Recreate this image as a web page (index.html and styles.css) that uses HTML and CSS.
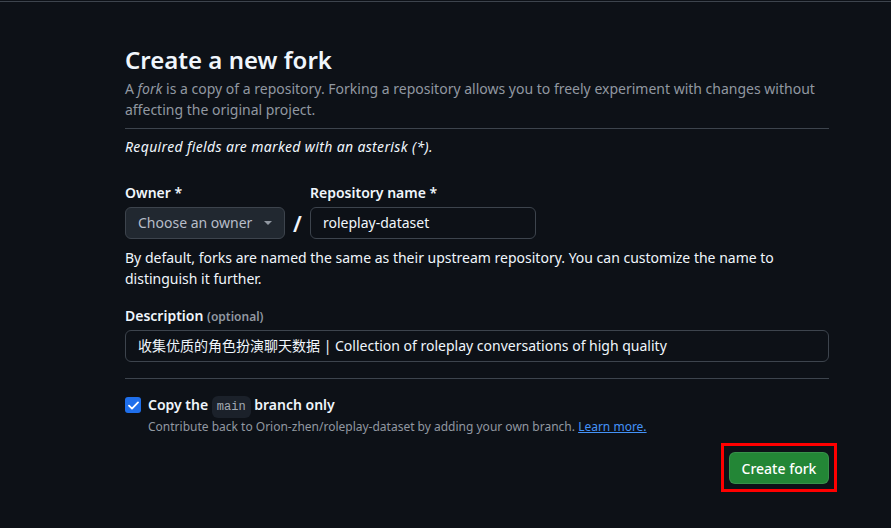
FILE: index.html
```html
<!DOCTYPE html>
<html lang="en">
<head>
<meta charset="utf-8">
<title>Create a new fork</title>
<link rel="stylesheet" href="styles.css">
</head>
<body>
<div class="topline"></div>
<main class="page">
  <div class="subhead">
    <h1 class="title">Create a new fork</h1>
    <p class="lead">A <em>fork</em> is a copy of a repository. Forking a repository allows you to freely experiment with changes without affecting the original project.</p>
  </div>
  <p class="required">Required fields are marked with an asterisk (*).</p>

  <div class="name-row">
    <div class="field owner">
      <label class="label">Owner *</label>
      <div class="select">
        <span>Choose an owner</span>
        <svg class="caret" width="8" height="4" viewBox="0 0 8 4"><path d="M0 0h8L4 4z" fill="#9198a1"/></svg>
      </div>
    </div>
    <span class="slash">/</span>
    <div class="field repo">
      <label class="label">Repository name *</label>
      <div class="input repo-input">roleplay-dataset</div>
    </div>
  </div>
  <p class="note">By default, forks are named the same as their upstream repository. You can customize the name to distinguish it further.</p>

  <div class="field desc">
    <label class="label desc-label">Description <span class="optional">(optional)</span></label>
    <div class="input desc-input">收集优质的角色扮演聊天数据 | Collection of roleplay conversations of high quality</div>
  </div>

  <div class="check-row">
    <span class="checkbox">
      <svg width="11" height="9" viewBox="0 0 11 9"><path d="M1 4.6l3 3L10 1.4" fill="none" stroke="#fff" stroke-width="1.8" stroke-linecap="round" stroke-linejoin="round"/></svg>
    </span>
    <div class="check-text">
      <div class="check-label">Copy the <code>main</code> branch only</div>
      <div class="check-note">Contribute back to Orion-zhen/roleplay-dataset by adding your own branch. <a href="#">Learn more.</a></div>
    </div>
  </div>

  <div class="actions">
    <div class="highlight">
      <button class="btn-primary">Create fork</button>
    </div>
  </div>
</main>
</body>
</html>
```

FILE: styles.css
```css
html, body {
  margin: 0;
  padding: 0;
  background: #0d1117;
  color: #f0f6fc;
  font-family: "Noto Sans", "Noto Sans CJK SC", sans-serif;
  font-size: 14px;
  line-height: 21px;
  height: 100%;
  overflow: hidden;
}

.topline {
  margin-top: 1px;
  height: 1px;
  background: #3d444d;
}

.page {
  width: 704px;
  margin-left: 125px;
  padding-top: 43px;
}

.subhead {
  border-bottom: 1px solid #3d444d;
  padding-bottom: 8px;
}

.title {
  margin: 0;
  font-size: 24px;
  line-height: 30px;
  font-weight: 600;
  color: #f0f6fc;
}

.lead {
  margin: 3px 0 0;
  color: #9198a1;
}

.lead em { font-style: italic; }

.required {
  margin: 7px 0 0;
  font-style: italic;
  letter-spacing: 0.35px;
  color: #f0f6fc;
}

.name-row {
  display: flex;
  align-items: flex-end;
  margin-top: 25px;
}

.label {
  display: block;
  font-weight: 600;
  margin-bottom: 4px;
}

.desc-label { margin-bottom: 3px; }

.optional {
  font-size: 12px;
  color: #9198a1;
}

.select {
  box-sizing: border-box;
  width: 160px;
  height: 32px;
  display: flex;
  align-items: center;
  justify-content: space-between;
  padding: 0 12px 1px 12px;
  background: #212830;
  border: 1px solid #3d444d;
  border-radius: 6px;
  color: #b7bdc8;
}

.caret { margin-top: 1px; }

.slash {
  width: 25px;
  text-align: center;
  font-size: 22px;
  line-height: 32px;
  font-weight: 600;
  height: 32px;
}

.input {
  box-sizing: border-box;
  height: 32px;
  line-height: 29px;
  padding: 0 12px;
  background: #0d1117;
  border: 1px solid #3d444d;
  border-radius: 6px;
  color: #f0f6fc;
  white-space: nowrap;
}

.repo-input { width: 226px; }

.note {
  margin: 8px 0 0;
  color: #f0f6fc;
}

.desc { margin-top: 16px; }

.desc-input {
  width: 704px;
}

.check-row {
  display: flex;
  gap: 7px;
  margin-top: 16px;
  border-top: 1px solid #3d444d;
  padding-top: 15px;
}

.checkbox {
  box-sizing: border-box;
  width: 16px;
  height: 16px;
  margin-top: 3px;
  border-radius: 3px;
  background: #1f6feb;
  display: flex;
  align-items: center;
  justify-content: center;
}

.check-label {
  font-weight: 600;
  line-height: 21px;
  height: 21px;
}

.check-label code {
  font-family: "Liberation Mono", monospace;
  font-weight: 400;
  font-size: 12px;
  line-height: 13px;
  color: #a3aab3;
  background: #1b212a;
  border-radius: 6px;
  padding: 4px 5px;
}

.check-note {
  margin-top: 3px;
  font-size: 12px;
  line-height: 18px;
  color: #9198a1;
}

.check-note a {
  color: #4493f8;
  text-decoration: underline;
}

.actions {
  display: flex;
  justify-content: flex-end;
  margin-top: 7px;
  margin-right: -8px;
}

.highlight {
  border: 3px solid #ff0000;
  padding: 6px 5px 5px 5px;
  display: flex;
}

.btn-primary {
  box-sizing: border-box;
  height: 32px;
  width: 100px;
  padding: 0;
  white-space: nowrap;
  background: #238636;
  border: 1px solid rgba(240,246,252,0.1);
  border-radius: 6px;
  color: #ffffff;
  font-family: "Noto Sans", sans-serif;
  font-size: 14px;
  font-weight: 500;
}
```
